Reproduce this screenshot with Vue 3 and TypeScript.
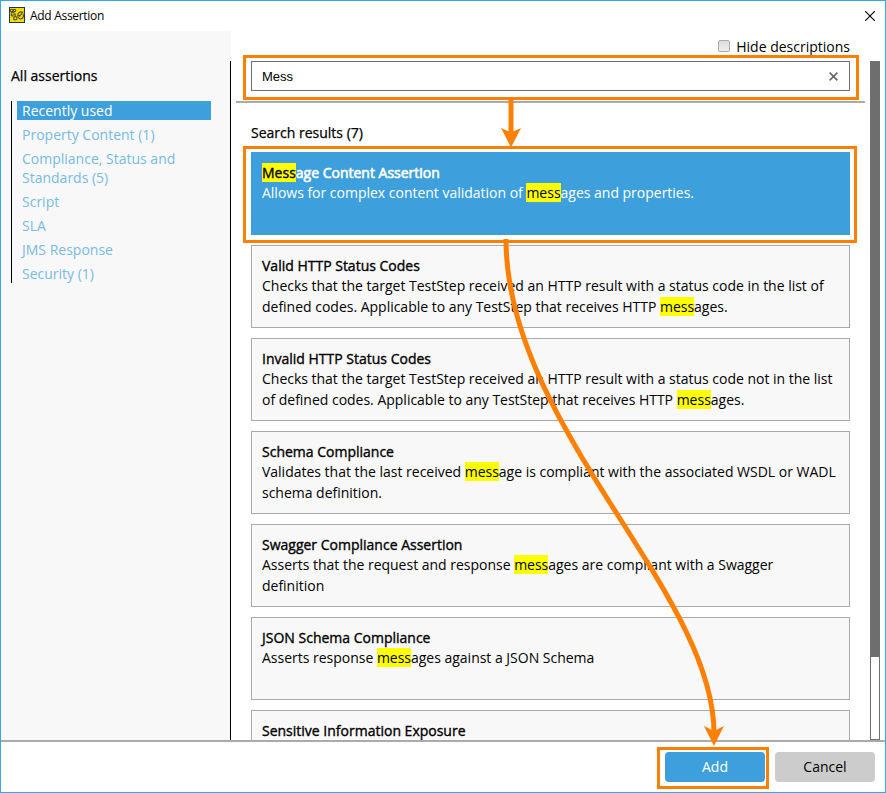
<script setup lang="ts">
interface Assertion { title: string; description: string }
interface Piece { text: string; hit: boolean }

const query = 'Mess'
const categories: string[] = [
  'Recently used', 'Property Content (1)', 'Compliance, Status and Standards (5)',
  'Script', 'SLA', 'JMS Response', 'Security (1)',
]
const assertions: Assertion[] = [
  { title: 'Message Content Assertion', description: 'Allows for complex content validation of messages and properties.' },
  { title: 'Valid HTTP Status Codes', description: 'Checks that the target TestStep received an HTTP result with a status code in the list of defined codes. Applicable to any TestStep that receives HTTP messages.' },
  { title: 'Invalid HTTP Status Codes', description: 'Checks that the target TestStep received an HTTP result with a status code not in the list of defined codes. Applicable to any TestStep that receives HTTP messages.' },
  { title: 'Schema Compliance', description: 'Validates that the last received message is compliant with the associated WSDL or WADL schema definition.' },
  { title: 'Swagger Compliance Assertion', description: 'Asserts that the request and response messages are compliant with a Swagger definition' },
  { title: 'JSON Schema Compliance', description: 'Asserts response messages against a JSON Schema' },
  { title: 'Sensitive Information Exposure', description: '' },
]

function pieces(text: string): Piece[] {
  return text
    .split(new RegExp(`(${query})`, 'i'))
    .filter((t) => t.length > 0)
    .map((t) => ({ text: t, hit: t.toLowerCase() === query.toLowerCase() }))
}
</script>

<template>
  <div class="window">
    <header class="titlebar">
      <svg class="logo" viewBox="0 0 16 16" width="16" height="16">
        <rect x="0.5" y="0.5" width="15" height="15" fill="#fbdc08" stroke="#1f3a4d" />
        <g fill="none" stroke="#4a5233" stroke-width="1.1">
          <circle cx="2.600" cy="3.600" r="1.300" />
          <circle cx="5.600" cy="3.400" r="1.200" />
          <circle cx="3.800" cy="6.800" r="1.500" />
          <circle cx="6.300" cy="11.300" r="1.700" />
          <path d="M1.500 8.500l3 .8M6 6.500l.5 3" />
          <path d="M14.300 4.500L10.800 9.200L9.600 8M13 5.300C11 4 8.600 6 8.700 8.700C8.900 12 12.600 12.800 14 10.400C14.600 9.200 14.500 7.800 14 6.800" />
        </g>
      </svg>
      <span class="caption">Add Assertion</span>
      <svg class="close" viewBox="0 0 10 10" width="10" height="10"><path d="M0 0L10 10M10 0L0 10" stroke="#000" stroke-width="1.1" /></svg>
    </header>
    <div class="body">
      <aside class="sidebar">
        <h2>All assertions</h2>
        <ul>
          <li v-for="(c, i) in categories" :key="c" :class="{ active: i === 0 }">{{ c }}</li>
        </ul>
      </aside>
      <main class="main">
        <div class="hide"><span class="box"></span><span>Hide descriptions</span></div>
        <div class="search">
          <span class="query">{{ query }}</span>
          <svg viewBox="0 0 9 9" width="9" height="9"><path d="M.6.6L8.400 8.400M8.400.6L.6 8.400" stroke="#666" stroke-width="1.5" /></svg>
        </div>
        <div class="rule"></div>
        <p class="count">Search results (7)</p>
        <div class="results">
          <article v-for="(a, i) in assertions" :key="a.title" class="card" :class="{ selected: i === 0 }">
            <h3><template v-for="(p, k) in pieces(a.title)" :key="k"><mark v-if="p.hit">{{ p.text }}</mark><template v-else>{{ p.text }}</template></template></h3>
            <p><template v-for="(p, k) in pieces(a.description)" :key="k"><mark v-if="p.hit">{{ p.text }}</mark><template v-else>{{ p.text }}</template></template></p>
          </article>
        </div>
      </main>
      <div class="scrollbar"><div class="thumb"></div></div>
    </div>
    <footer class="footer">
      <button class="add">Add</button>
      <button>Cancel</button>
    </footer>
    <svg class="callouts" viewBox="0 0 886 793" width="886" height="793">
      <g fill="none" stroke="#ff8000">
        <rect x="244.500" y="56.500" width="613" height="42" stroke-width="3" />
        <rect x="244.500" y="147.500" width="611" height="94" stroke-width="3" />
        <rect x="658.500" y="748.500" width="109" height="39" stroke-width="3" />
        <path d="M511 97V135" stroke-width="5" />
        <path d="M506 239C506 426 714 591 714 733" stroke-width="5" />
      </g>
      <g fill="#ff8000">
        <path d="M511 147.500L501 128L511 132.500L521 128Z" />
        <path d="M714 746L704 726L714 731L724 726Z" />
      </g>
    </svg>
  </div>
</template>

<style>
body { margin: 0; background: #fff; }
</style>

<style scoped>
* { box-sizing: border-box; }
.window { position: relative; width: 886px; height: 793px; border: 1px solid #3aa5ea; background: #fff; display: flex; flex-direction: column; font: 14px/19px "Open Sans", sans-serif; color: #000; overflow: hidden; }
.titlebar { height: 30px; flex: none; display: flex; align-items: center; padding: 0 10px 0 8px; }
.logo { margin-top: -2px; }
.caption { font-size: 12px; margin: -2px 0 0 5px; flex: 1; letter-spacing: -0.3px; }
.close { margin-top: -1px; }
.body { flex: 1; min-height: 0; display: flex; }
.sidebar { width: 230px; padding: 35px 0 0 10px; background: linear-gradient(#000, #000) right 30px / 1px 100% no-repeat #f8f8f8; }
h2, h3, .count { margin: 0; font-size: 14px; font-weight: 400; -webkit-text-stroke: 0.35px currentColor; }
h2, .count { -webkit-text-stroke-width: 0.25px; }
ul { list-style: none; margin: 16px 0 0; padding: 0 0 0 5px; border-left: 1px solid #000; display: flex; flex-direction: column; gap: 5px; color: #77bbe3; }
li { width: 194px; padding: 0 5px; }
li.active { background: #3d9fdb; color: #fff; }
.main { width: 634px; padding-left: 5px; display: flex; flex-direction: column; overflow: hidden; }
.hide { height: 30px; padding: 6px 15px 0 0; display: flex; justify-content: flex-end; }
.box { width: 12px; height: 12px; margin: 3px 6px 0 0; border: 1px solid #aaa; border-radius: 2px; background: linear-gradient(#ddd, #eee); }
.search { height: 30px; flex: none; margin: 0 15px; border: 1px solid #6e6e6e; padding: 0 11.5px 0 10px; display: flex; align-items: center; justify-content: space-between; }
.query { font: 13px "Liberation Sans", sans-serif; }
.rule { height: 2px; flex: none; margin-top: 10px; background: #aaa; }
.count { margin: 20px 15px 10px; }
.results { flex: 1; min-height: 0; overflow: hidden; margin: 0 15px; display: flex; flex-direction: column; gap: 10px; }
.card { height: 83px; flex: none; padding: 10px; border: 1px solid #aaa; background: #f8f8f8; }
.card.selected { background: #3d9fdb; border-color: #3d9fdb; color: #fff; }
.card.selected h3 { -webkit-text-stroke-width: 0.6px; }
.card p { margin: 0; padding-right: 2px; line-height: 21px; letter-spacing: -0.012px; }
mark { background: #ff0; color: #000; }
h3 mark { -webkit-text-stroke: 0.35px #000; }
.scrollbar { width: 10px; margin: 30px 0 0 5px; border: 1px solid #6e6e6e; }
.thumb { height: 595px; background: #6e6e6e; }
.footer { height: 52px; flex: none; border-top: 2px solid #aaa; display: flex; justify-content: flex-end; gap: 10px; padding: 10px 10px 0 0; }
button { width: 100px; height: 30px; border: 0; border-radius: 4px; background: #ccc; color: #000; font: 14px/19px "Open Sans", sans-serif; padding: 0 0 2px; }
button.add { background: #3d9fdb; color: #fff; }
.callouts { position: absolute; left: -1px; top: -1px; }
</style>
